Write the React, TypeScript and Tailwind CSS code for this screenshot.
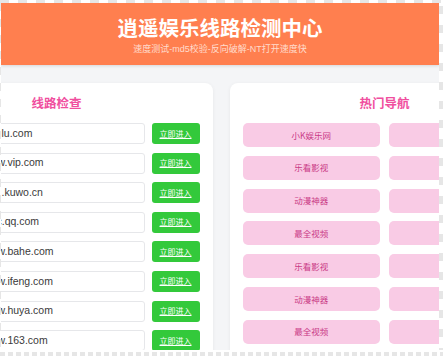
const lines = [
  { text: 'lu.com', shift: 0 },
  { text: 'w.vip.com', shift: -4 },
  { text: '.kuwo.cn', shift: 0 },
  { text: 'c.qq.com', shift: -5 },
  { text: 'w.bahe.com', shift: -4 },
  { text: 'w.ifeng.com', shift: -4 },
  { text: 'w.huya.com', shift: -4 },
  { text: 'w.163.com', shift: -4 },
]

const navs = ['小K娱乐网', '乐看影视', '动漫神器', '最全视频', '乐看影视', '动漫神器', '最全视频']

export default function App() {
  return (
    <div className="w-[443px] h-[356px] flex flex-col bg-white overflow-hidden font-['Liberation_Sans','Noto_Sans_CJK_SC',sans-serif]">
      {/* transparent checker edges */}
      <div className="h-[3px] shrink-0 bg-[repeating-linear-gradient(90deg,#e6e6e6_0_9px,#fff_9px_18px)]" />
      <div className="flex flex-1 min-h-0">
        <div className="w-px shrink-0 bg-[repeating-linear-gradient(180deg,#e6e6e6_0_8px,#fff_8px_16px)]" />

        <div className="w-[438px] shrink-0 overflow-hidden bg-[#f4f5f7] flex flex-col">
          {/* Header */}
          <div className="h-[62px] shrink-0 bg-[#ff7f4f] shadow-[0_1px_3px_rgba(0,0,0,0.12)] flex flex-col items-center pt-[11px]">
            <h1 className="text-[20.5px] leading-[26px] font-bold text-white font-['Noto_Sans_CJK_SC',sans-serif]">逍遥娱乐线路检测中心</h1>
            <p className="mt-[3px] text-[9px] leading-[12px] text-[#ffdccd]">速度测试-md5校验-反向破解-NT打开速度快</p>
          </div>

          {/* Cards */}
          <div className="flex justify-center gap-[17px] pt-[18px]">
            <div className="w-[312px] shrink-0 h-[320px] bg-white rounded-lg shadow-[0_1px_4px_rgba(0,0,0,0.06)] px-[13px] pt-3">
              <h2 className="text-center text-[12.5px] leading-4 font-bold text-[#f04e9e] font-['Noto_Sans_CJK_SC',sans-serif]">线路检查</h2>
              <div className="mt-3 flex flex-col gap-[8.6px]">
                {lines.map((l, i) => (
                  <div key={i} className="flex items-center gap-[7px]">
                    <div className="w-[231px] h-[21px] border border-[#e6e7ea] rounded-[3px] bg-white overflow-hidden flex items-center pl-[87px]">
                      <span className="text-[10.5px] text-[#3a3a3a] whitespace-nowrap" style={{ marginLeft: l.shift }}>{l.text}</span>
                    </div>
                    <button className="w-[48px] h-[21px] rounded-[3px] bg-[#33c93b] text-white text-[8px] underline font-['Noto_Sans_CJK_SC',sans-serif]">立即进入</button>
                  </div>
                ))}
              </div>
            </div>

            <div className="w-[310px] shrink-0 h-[320px] bg-white rounded-lg shadow-[0_1px_4px_rgba(0,0,0,0.06)] px-[13px] pt-3">
              <h2 className="text-center text-[12.5px] leading-4 font-bold text-[#f04e9e] font-['Noto_Sans_CJK_SC',sans-serif]">热门导航</h2>
              <div className="mt-3 grid grid-cols-2 gap-x-[9px] gap-y-[8.8px]">
                {navs.map((n, i) => (
                  <>
                    <div key={'a' + i} className="h-6 rounded-[5px] bg-[#f9cbe5] flex items-center justify-center text-[8.5px] text-[#c93a86] font-['Noto_Sans_CJK_SC',sans-serif]">{n}</div>
                    <div key={'b' + i} className="h-6 rounded-[5px] bg-[#f9cbe5]" />
                  </>
                ))}
              </div>
            </div>
          </div>
        </div>

        <div className="w-[4px] shrink-0 bg-[repeating-linear-gradient(180deg,#fff_0_3px,#e6e6e6_3px_11px,#fff_11px_19px)]" />
      </div>
      <div className="h-[6px] shrink-0 pt-[2px] bg-white">
        <div className="h-[4px] bg-[repeating-linear-gradient(90deg,#e6e6e6_0_5px,#fff_5px_8px)]" />
      </div>
    </div>
  )
}
